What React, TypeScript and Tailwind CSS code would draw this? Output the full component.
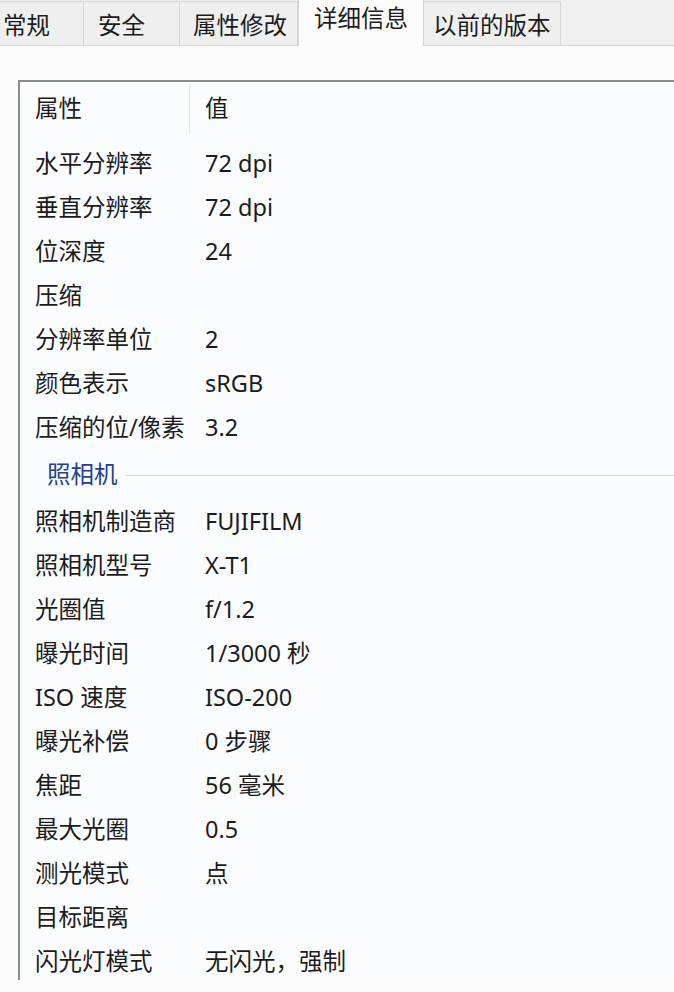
import React from "react";

const tabs = [
  { label: "常规", w: "w-[84px]", pad: "pl-[3px]", active: false },
  { label: "安全", w: "w-[96px]", pad: "pl-[14px]", active: false },
  { label: "属性修改", w: "w-[118px]", pad: "pl-[13px]", active: false },
  { label: "详细信息", w: "w-[126px]", pad: "pl-[15px]", active: true },
  { label: "以前的版本", w: "w-[137px]", pad: "pl-[9px]", active: false },
];

const imageRows: [string, string][] = [
  ["水平分辨率", "72 dpi"],
  ["垂直分辨率", "72 dpi"],
  ["位深度", "24"],
  ["压缩", ""],
  ["分辨率单位", "2"],
  ["颜色表示", "sRGB"],
  ["压缩的位/像素", "3.2"],
];

const cameraRows: [string, string][] = [
  ["照相机制造商", "FUJIFILM"],
  ["照相机型号", "X-T1"],
  ["光圈值", "f/1.2"],
  ["曝光时间", "1/3000 秒"],
  ["ISO 速度", "ISO-200"],
  ["曝光补偿", "0 步骤"],
  ["焦距", "56 毫米"],
  ["最大光圈", "0.5"],
  ["测光模式", "点"],
  ["目标距离", ""],
  ["闪光灯模式", "无闪光，强制"],
];

function Row({ label, value }: { label: string; value: string }) {
  return (
    <div className="flex h-[44px] items-center">
      <div className="w-[185px] shrink-0 pl-[15px] whitespace-nowrap">{label}</div>
      <div className="whitespace-nowrap">{value}</div>
    </div>
  );
}

export default function App() {
  return (
    <div className="w-[674px] h-[992px] overflow-hidden bg-[#fcfcfd] text-[#1c1c1c] text-[23.5px] leading-none font-['Noto_Sans','Noto_Sans_CJK_SC',sans-serif]">
      {/* Tab strip */}
      <div className="flex h-[46px] items-end bg-[#f0f0f0] border-b border-[#d6d6d6]">
        {tabs.map((t) =>
          t.active ? (
            <div
              key={t.label}
              className={`${t.w} ${t.pad} h-[47px] -mb-px flex items-center pb-[7px] bg-[#fcfcfd] border-x border-[#d6d6d6]`}
            >
              {t.label}
            </div>
          ) : (
            <div
              key={t.label}
              className={`${t.w} ${t.pad} h-[44px] flex items-center pt-[4px] bg-[#efefef] border-r border-t border-[#d6d6d6]`}
            >
              {t.label}
            </div>
          )
        )}
      </div>

      {/* Details list, runs past the right and bottom edges */}
      <div className="mt-[34px] ml-[18px] w-[700px] border-l-2 border-t-2 border-[#8c8c8c] bg-[#fbfcfe] h-[900px]">
        <div className="flex h-[54px] items-center">
          <div className="w-[170px] shrink-0 pl-[15px] self-stretch flex items-center border-r border-[#e6e6e6] my-[2px]">
            属性
          </div>
          <div className="pl-[15px]">值</div>
        </div>
        <div className="pt-[6px]">
          {imageRows.map(([l, v]) => (
            <Row key={l} label={l} value={v} />
          ))}
          <div className="flex h-[50px] items-center gap-[7px] pl-[27px]">
            <span className="text-[#23408f] whitespace-nowrap">照相机</span>
            <div className="flex-1 h-px bg-[#d3ddeb]" />
          </div>
          {cameraRows.map(([l, v]) => (
            <Row key={l} label={l} value={v} />
          ))}
        </div>
      </div>
    </div>
  );
}
